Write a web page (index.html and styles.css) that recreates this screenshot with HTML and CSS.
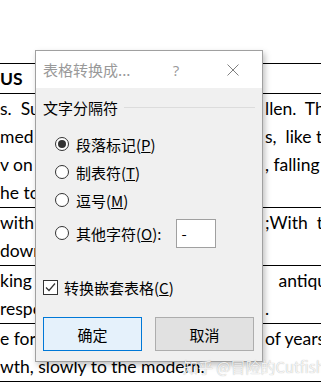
FILE: index.html
```html
<!DOCTYPE html>
<html>
  <head>
    <title>表格转换成文本</title>
    <link rel="stylesheet" href="styles.css">
  </head>
  <body>

    <main class="doc">
      <div class="doc-row">
        <div class="doc-line"><b class="left">US</b></div>
      </div>
      <div class="doc-row">
        <div class="doc-line"><span class="left">s.&nbsp;&nbsp;Su</span><span class="right">llen.&nbsp;&nbsp;Th</span></div>
        <div class="doc-line"><span class="left">med</span><span class="right">s,&nbsp;&nbsp;like&nbsp;t</span></div>
        <div class="doc-line"><span class="left">v on</span><span class="right">, falling</span></div>
        <div class="doc-line"><span class="left">he to</span></div>
      </div>
      <div class="doc-row">
        <div class="doc-line"><span class="left">with</span><span class="right">;With&nbsp;&nbsp;t</span></div>
        <div class="doc-line"><span class="left">down</span></div>
      </div>
      <div class="doc-row">
        <div class="doc-line"><span class="left">king</span><span class="right">&nbsp;&nbsp;&nbsp;antiqu</span></div>
        <div class="doc-line"><span class="left">respo</span><span class="right">.</span></div>
      </div>
      <div class="doc-row">
        <div class="doc-line"><span class="left">e form</span><span class="right">of years</span></div>
        <div class="doc-line"><span class="full">wth, slowly to the modern.</span></div>
      </div>
    </main>

    <section class="dialog">
      <header class="dialog-title">
        <span class="dialog-title-text">表格转换成...</span>
        <span class="title-help">?</span>
        <span class="title-close">
          <svg width="12" height="12" viewBox="0 0 12 12">
            <path d="M0.5 0.5 L11.5 11.5 M11.5 0.5 L0.5 11.5" stroke="#808080" stroke-width="1" fill="none"/>
          </svg>
        </span>
      </header>

      <div class="dialog-body">
        <div class="group-label">文字分隔符</div>

        <div class="radio-list">
          <label class="radio-row"><i class="radio radio-on"></i>段落标记(<u>P</u>)</label>
          <label class="radio-row"><i class="radio"></i>制表符(<u>T</u>)</label>
          <label class="radio-row"><i class="radio"></i>逗号(<u>M</u>)</label>
          <label class="radio-row radio-row-other"><i class="radio"></i>其他字符(<u>O</u>):<span class="text-box">-</span></label>
        </div>

        <label class="check-row">
          <i class="checkbox">
            <svg width="13" height="13" viewBox="0 0 13 13">
              <path d="M2 6.5 L5 9.5 L11 2.5" stroke="#333" stroke-width="1.2" fill="none"/>
            </svg>
          </i>
          转换嵌套表格(<u>C</u>)
        </label>

        <div class="buttons">
          <button class="btn btn-default">确定</button>
          <button class="btn">取消</button>
        </div>
      </div>
    </section>

    <div class="watermark">知乎 @冒险的Cutfish</div>

  </body>
</html>
```

FILE: styles.css
```css
*,
*:before,
*:after {
  box-sizing: border-box;
}

html,
body {
  height: 100%;
}

body {
  position: relative;
  margin: 0px;
  background: #fff;
  color: #000;
  overflow: hidden;
  font-family: 'Lato', 'Liberation Sans', sans-serif;
}

/* Document behind the dialog */

.doc {
  padding-top: 63px;
  font-size: 17.5px;
}

.doc-row {
  border-top: 1px solid #000;
  padding-top: 1px;
}
.doc-row:last-child {
  border-bottom: 1px solid #000;
}

.doc-line {
  display: grid;
  grid-template-columns: 35px 228px 1fr;
  height: 28px;
  line-height: 28px;
  white-space: nowrap;
}

.left {
  overflow: hidden;
}
.right {
  grid-column: 3;
  overflow: hidden;
  padding-left: 2px;
}
.full {
  grid-column: 1 / -1;
}

/* Dialog */

.dialog {
  position: absolute;
  left: 35px;
  top: 50px;
  width: 228px;
  height: 312px;
  display: flex;
  flex-flow: column;
  background: #f0f0f0;
  border: 1px solid #a0a0a0;
  box-shadow: 2px 3px 6px rgba(0, 0, 0, 0.25);
  font-family: 'Noto Sans CJK SC', 'Microsoft YaHei', sans-serif;
  font-size: 15px;
  color: #000;
}

.dialog-title {
  display: flex;
  align-items: center;
  height: 37px;
  background: #fff;
  padding: 0px 19px 0px 7px;
}
.dialog-title-text {
  flex: 1;
  color: #999;
}
.title-help {
  width: 20px;
  text-align: center;
  color: #999;
  font-family: 'Open Sans', sans-serif;
  margin-right: 37px;
}
.title-close {
  display: flex;
  justify-content: center;
  width: 20px;
}

.dialog-body {
  display: flex;
  flex-flow: column;
  padding: 8px 7px 0px 7px;
}

.group-label {
  display: flex;
  align-items: center;
  height: 22px;
}
.group-label:after {
  content: '';
  flex: 1;
  border-top: 1px solid #dcdcdc;
  margin-left: 6px;
}

.radio-list {
  display: flex;
  flex-flow: column;
  margin-top: 12px;
  padding-left: 12px;
}

.radio-row {
  display: flex;
  align-items: center;
  height: 28px;
}
.radio-row-other {
  height: 38px;
}

.radio {
  display: flex;
  align-items: center;
  justify-content: center;
  width: 14px;
  height: 14px;
  margin-right: 7px;
  border: 1px solid #333;
  border-radius: 50%;
  background: #fff;
}
.radio-on:after {
  content: '';
  width: 8px;
  height: 8px;
  border-radius: 50%;
  background: #333;
}

.text-box {
  width: 40px;
  height: 29px;
  margin-left: 15px;
  padding-left: 4px;
  line-height: 27px;
  background: #fff;
  border: 1px solid #a0a0a0;
}

.check-row {
  display: flex;
  align-items: center;
  height: 24px;
  margin-top: 23px;
}

.checkbox {
  display: flex;
  align-items: center;
  justify-content: center;
  width: 15px;
  height: 15px;
  margin-right: 6px;
  border: 1px solid #333;
  background: #fff;
}

.buttons {
  display: flex;
  gap: 13px;
  margin-top: 18px;
}

.btn {
  width: 99px;
  height: 34px;
  padding: 0px;
  background: #e1e1e1;
  border: 1px solid #adadad;
  font: inherit;
  color: #000;
}
.btn-default {
  background: #e5f1fb;
  border-color: #0078d7;
}

.watermark {
  position: absolute;
  left: 183px;
  top: 356px;
  font-family: 'Noto Sans CJK SC', sans-serif;
  font-size: 15px;
  color: rgba(255, 255, 255, 0.85);
  text-shadow: 0px 0px 1px rgba(0, 0, 0, 0.35);
  white-space: nowrap;
}
```
